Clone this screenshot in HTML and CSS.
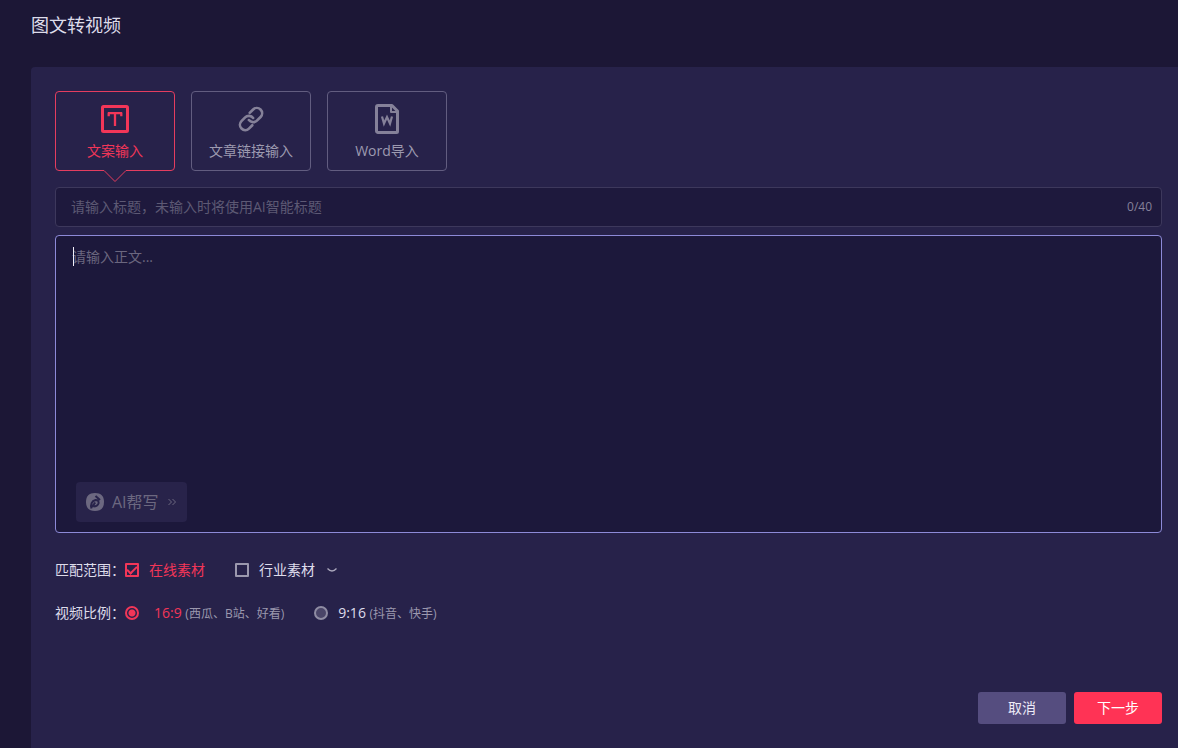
FILE: index.html
```html
<!DOCTYPE html>
<html lang="zh-CN">
<head>
<meta charset="utf-8">
<meta name="viewport" content="width=device-width, initial-scale=1">
<title>图文转视频</title>
<link rel="stylesheet" href="styles.css">
</head>
<body>
<div class="page">
  <header class="header"><h1 class="title">图文转视频</h1></header>
  <main class="panel">
    <nav class="tabs" aria-label="输入方式">
      <button type="button" class="tab tab-active" aria-pressed="true">
        <svg class="tab-icon" viewBox="0 0 32 32" fill="none" stroke="currentColor" stroke-width="3" aria-hidden="true"><rect x="3.5" y="3.5" width="25" height="25" rx="1"/><path d="M9 10.200h14M9.700 9.500v3.700M22.300 9.500v3.700M16 10.500V23" stroke-width="2.300"/></svg>
        <span>文案输入</span>
        <svg class="tab-arrow" viewBox="0 0 24 12" aria-hidden="true"><path class="arrow-fill" d="M1 0h22v1L12 11.500 1 1z"/><path class="arrow-line" d="M1 .5l11 11L23 .5"/></svg>
      </button>
      <button type="button" class="tab" aria-pressed="false">
        <svg class="tab-icon" viewBox="0 0 32 32" fill="none" stroke="currentColor" stroke-width="2.500" stroke-linecap="round" aria-hidden="true"><g transform="translate(3.300 3.300) scale(1.060)"><path d="M10 13a5 5 0 0 0 7.540.540l3.500-3.500a5 5 0 0 0-7.070-7.070l-3.200 3.200"/><path d="M14 11a5 5 0 0 0-7.540-.540l-3.500 3.500a5 5 0 0 0 7.070 7.070l3.200-3.200"/></g></svg>
        <span>文章链接输入</span>
      </button>
      <button type="button" class="tab" aria-pressed="false">
        <svg class="tab-icon" viewBox="0 0 32 32" fill="none" stroke="currentColor" stroke-width="3" stroke-linejoin="round" aria-hidden="true"><path d="M7 2.500h14l5.500 5.500v20.500a1 1 0 0 1-1 1h-18.500a1.500 1.500 0 0 1-1.500-1.500v-24a1.500 1.500 0 0 1 1.500-1.500z"/><path d="M20 3v6h6" stroke-width="2"/><path d="M11 13.500l2 7 3-6.500 3 6.500 2-7" stroke-width="2.200" stroke-linejoin="miter"/></svg>
        <span>Word导入</span>
      </button>
    </nav>

    <div class="title-field">
      <input class="title-input" type="text" maxlength="40" aria-label="标题" placeholder="请输入标题，未输入时将使用AI智能标题">
      <span class="counter">0/40</span>
    </div>

    <div class="body-field">
      <textarea class="body-input" aria-label="正文" placeholder="请输入正文..."></textarea>
      <span class="caret" aria-hidden="true"></span>
      <button type="button" class="ai-button">
        <svg class="ai-icon" viewBox="0 0 20 20" aria-hidden="true"><path class="ai-disc" d="M10 1c6 0 9 3 9 9s-3 9-9 9-9-3-9-9 3-9 9-9z"/><path class="ai-pen" d="M6.500 16.500c-1.200-4 .2-7.500 4-8.500 2.500 0 3.500 1.500 3 3.500-.7 2-2.500 3-5 3M7 15l3.200-4.500M10.500 4l4.500 4"/></svg>
        <span>AI帮写</span>
        <svg class="ai-more" viewBox="0 0 10 10" aria-hidden="true"><path d="M1.500 2l3 3-3 3M5.500 2l3 3-3 3"/></svg>
      </button>
    </div>

    <div class="options">
      <div class="row" role="group" aria-labelledby="range-label">
        <span class="row-label" id="range-label">匹配范围：</span>
        <label class="choice choice-on"><input class="check" type="checkbox" checked><span>在线素材</span></label>
        <label class="choice"><input class="check" type="checkbox"><span>行业素材</span></label>
        <button type="button" class="expand" aria-label="展开行业素材"><svg class="expand-icon" viewBox="0 0 12 8" aria-hidden="true"><path d="M1.500 2.500Q6 7.500 10.500 2.500"/></svg></button>
      </div>
      <div class="row" role="radiogroup" aria-labelledby="ratio-label">
        <span class="row-label" id="ratio-label">视频比例：</span>
        <label class="choice choice-wide choice-on"><input class="radio" type="radio" name="ratio" checked><span class="ratio">16:9 <small class="hint">(西瓜、B站、好看)</small></span></label>
        <label class="choice"><input class="radio" type="radio" name="ratio"><span class="ratio">9:16 <small class="hint">(抖音、快手)</small></span></label>
      </div>
    </div>

    <footer class="actions">
      <button type="button" class="action cancel">取消</button>
      <button type="button" class="action next">下一步</button>
    </footer>
  </main>
</div>
</body>
</html>
```
FILE: styles.css
```css
* { box-sizing: border-box; }

body {
  margin: 0;
  background: #1c1736;
  color: #dedcea;
  font: 14px/20px "Open Sans", "Noto Sans CJK SC", sans-serif;
}

button, input, textarea { font: inherit; color: inherit; }
button { margin: 0; padding: 0; cursor: pointer; }

.page { display: flex; flex-direction: column; min-height: 100vh; padding-left: 31px; }
.header { padding: 13px 0 30px; }
.title { margin: 0; font-size: 18px; line-height: 24px; font-weight: 400; }

.panel {
  flex: 1;
  display: flex;
  flex-direction: column;
  padding: 24px 16px 24px 24px;
  background: #27224a;
  border-top-left-radius: 4px;
}

.tabs { display: flex; gap: 16px; margin-bottom: 16px; }
.tab {
  position: relative;
  display: flex;
  flex-direction: column;
  align-items: center;
  gap: 6px;
  width: 120px;
  height: 80px;
  padding-top: 11px;
  border: 1px solid #625d80;
  border-radius: 4px;
  background: none;
  color: #9d9ab0;
}
.tab-icon { width: 32px; height: 32px; color: #858199; }
.tab-active { border-color: #e43d5f; color: #f23658; }
.tab-active .tab-icon { color: #f23658; }
.tab-arrow { position: absolute; top: 100%; left: 50%; width: 24px; height: 12px; margin-left: -12px; }
.arrow-fill { fill: #27224a; }
.arrow-line { fill: none; stroke: #e43d5f; }

.title-field {
  display: flex;
  align-items: center;
  height: 40px;
  margin-bottom: 8px;
  padding: 0 9px 0 15px;
  border: 1px solid #3d385c;
  border-radius: 4px;
  background: #1e193d;
}
.title-input { flex: 1; min-width: 0; padding: 0; border: 0; outline: 0; background: none; }
.title-input::placeholder, .body-input::placeholder { color: #5d5974; opacity: 1; }
.counter { color: #85819a; font-size: 12px; }

.body-field { position: relative; display: flex; }
.body-input {
  flex: 1;
  height: 298px;
  padding: 11px 16px 60px;
  border: 1px solid #8d8ad8;
  border-radius: 4px;
  outline: 0;
  resize: none;
  background: #1c183b;
}
.body-input::placeholder { color: #6b677f; }
.caret { position: absolute; top: 12px; left: 18px; width: 1px; height: 19px; background: #f0eef8; }
.ai-button {
  position: absolute;
  left: 21px;
  bottom: 11px;
  display: flex;
  align-items: center;
  height: 40px;
  padding: 0 10px 0 9px;
  border: 0;
  border-radius: 4px;
  background: #28234a;
  color: #6c6880;
  font-size: 16px;
}
.ai-icon { width: 20px; height: 20px; margin-right: 7px; }
.ai-disc { fill: #6c6880; }
.ai-pen { fill: none; stroke: #28234a; stroke-width: 2; stroke-linejoin: round; }
.ai-more { width: 10px; height: 10px; margin-left: 8px; fill: none; stroke: #6c6880; }

.options { display: flex; flex-direction: column; gap: 19px; margin: 25px 0 24px; }
.row { display: flex; align-items: center; height: 24px; }
.row-label { width: 70px; white-space: nowrap; }
.choice { display: flex; align-items: center; gap: 10px; margin-right: 30px; white-space: nowrap; }
.choice-wide { gap: 15px; }
.choice-on { color: #f23658; }
.check, .radio { appearance: none; flex: none; width: 14px; height: 14px; margin: 0; border: 2px solid #9b98ae; }
.check { display: grid; place-items: center; border-radius: 1px; }
.check:checked { border-color: #f23658; }
.check:checked::after {
  content: "";
  width: 8px;
  height: 4px;
  border: solid #f23658;
  border-width: 0 0 2px 2px;
  transform: translateY(-1px) rotate(-45deg);
}
.radio { border-radius: 50%; border-color: #8f8ca3; background: #4a4568; }
.radio:checked { border-color: #f23658; background: radial-gradient(circle, #f23658 3px, #27224a 4px); }
.hint { color: #9b98ae; font-size: 12px; }
.expand { display: flex; margin-left: -19px; border: 0; background: none; }
.expand-icon { width: 12px; height: 8px; fill: none; stroke: #aaa7bc; stroke-width: 1.3; }

.actions { display: flex; justify-content: flex-end; gap: 8px; margin-top: auto; }
.action { width: 88px; height: 32px; border: 0; border-radius: 3px; }
.cancel { background: #554d7f; color: #edebf7; }
.next { background: #ff3355; color: #fff; }
```
